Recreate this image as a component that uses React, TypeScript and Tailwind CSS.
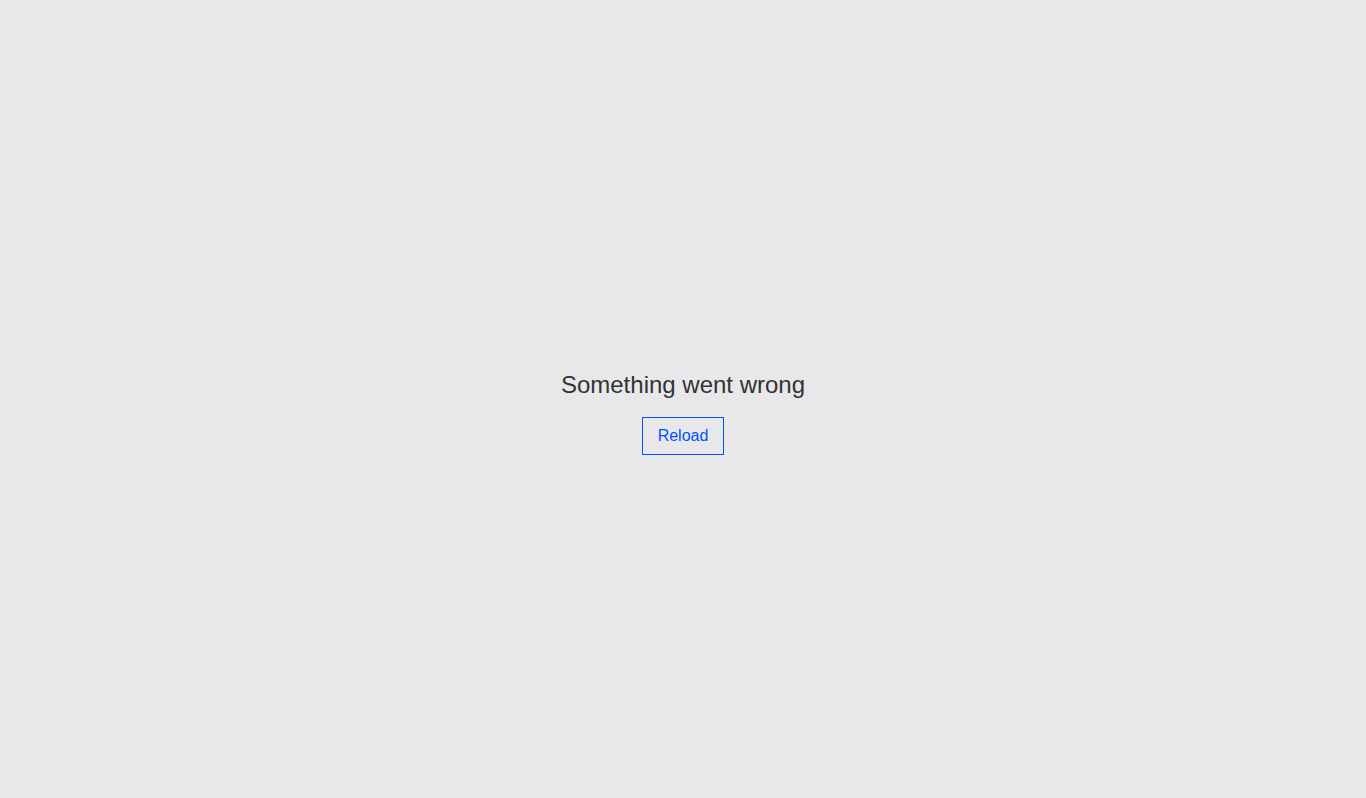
export default function App() {
  return (
    <div className="flex h-[798px] w-full flex-col items-center justify-center bg-[#e8e8ea] pt-[28px]" style={{ fontFamily: '"Liberation Sans", Arial, sans-serif' }}>
      <div className="text-[24px] leading-[28px] text-[#333333]">Something went wrong</div>
      <button className="mt-[18px] border border-[#0050ff] bg-transparent px-[15px] py-[8px] text-[16px] leading-[20px] text-[#0050ff]">Reload</button>
    </div>
  );
}
